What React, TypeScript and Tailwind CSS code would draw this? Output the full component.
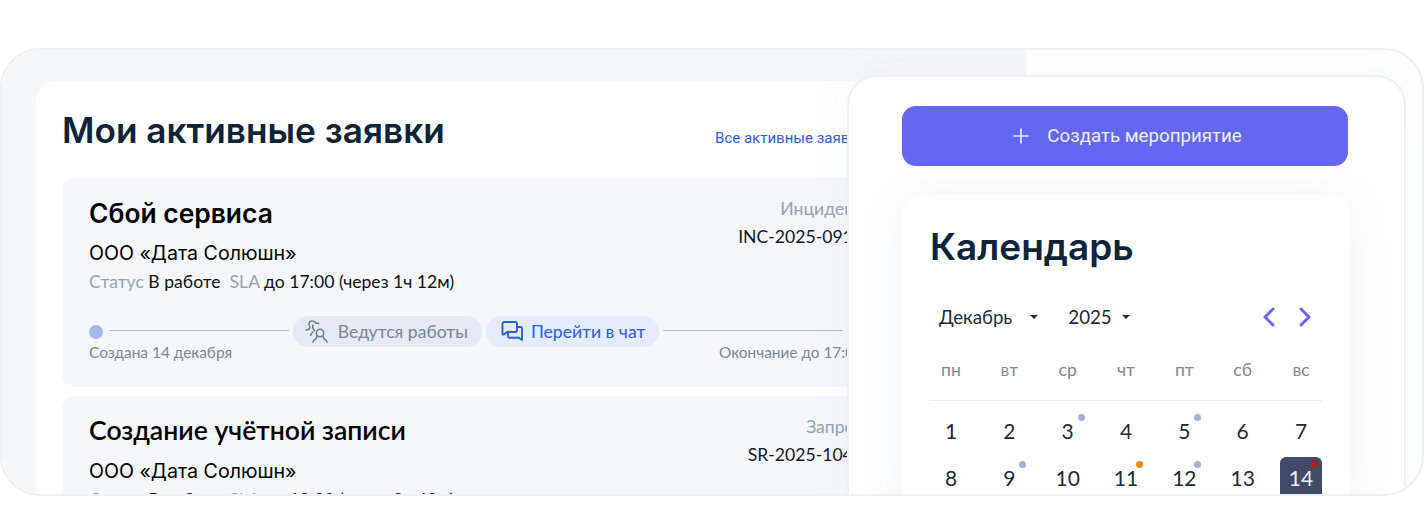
import React from "react";

const lato = "font-['Lato','Liberation_Sans',sans-serif]";

function WorkIcon() {
  return (
    <svg width="24" height="24" viewBox="0 0 24 24" fill="none" stroke="#6f7c8d" strokeWidth="1.5" strokeLinecap="round" strokeLinejoin="round">
      <path d="M1 10c2 0 3.500-.8 3.800-2.300C5 6 3.800 5.500 4 3.500 4.200 1.500 6 1 7.500 1c1.500 0 2.800.7 3.200 2" />
      <path d="M10.700 3l3 .5" />
      <path d="M8 5c-.8 2 0 4 1.500 5.500" />
      <path d="M8 12c-1.200.8-2 2-2.500 3.500" />
      <circle cx="15" cy="13" r="3.700" />
      <path d="M12 16c0 2-1 3-2.500 3.800-.8.4-1.300 1.200-1.500 2.200" />
      <path d="M18 16c0 2 1 3 2.500 3.800.8.4 1.300 1.200 1.500 2.200" />
    </svg>
  );
}

function ChatIcon() {
  return (
    <svg width="24" height="24" viewBox="0 0 24 24" fill="none" stroke="#2860dc" strokeWidth="1.9" strokeLinecap="round" strokeLinejoin="round">
      <path d="M4 2h11a2 2 0 0 1 2 2v6a2 2 0 0 1-2 2H7l-3 2.500c-.6.3-1.500.2-1.500-1V4A2 2 0 0 1 4 2Z" />
      <path d="M17 7h3.500A1.500 1.500 0 0 1 22 8.500V20l-3.200-2.200H9.500A1.500 1.500 0 0 1 8 16.300V12" />
    </svg>
  );
}

function Ticket({ title, type, code, status, sla, titleClass }: { title: string; type: string; code: string; status: string; sla: string; titleClass: string }) {
  return (
    <div className="rounded-[10px] bg-[#f5f7fb] pt-[19px] pb-[27px] pl-[26px] pr-[26px]">
      <div className="flex justify-between">
        <div>
          <div className={`leading-[32px] font-semibold text-black ${titleClass}`}>{title}</div>
          <div className="mt-[11px] text-[19.6px] leading-[26px] text-black font-['Inter',sans-serif]">ООО «Дата Солюшн»</div>
          <div className={`mt-[3px] text-[17.6px] leading-[26px] text-[#111] whitespace-nowrap ${lato}`}>
            <span className="text-[#94a3b3]">Статус</span> {status}
            <span className="ml-[9px] text-[#94a3b3]">SLA</span> {sla}
          </div>
        </div>
        <div className={`flex flex-col items-end pt-[1px] pr-[4px] text-[17.6px] leading-[22px] whitespace-nowrap ${lato}`}>
          <div className="text-[#94a3b3]">{type}</div>
          <div className="mt-[6px] text-[#111827]">{code}</div>
        </div>
      </div>
      <div className="mt-[21px] flex items-center">
        <span className="h-[14px] w-[14px] shrink-0 rounded-full bg-[#a4b9e8]" />
        <span className="ml-[6px] mr-[4px] h-px flex-1 -translate-y-px bg-[#a9bfec]" />
        <span className={`flex h-[31px] items-center gap-[9px] rounded-full bg-[#e5e9f4] pl-[12px] pr-[14px] text-[17.6px] text-[#7b8794] ${lato}`}>
          <WorkIcon />
          <span className="pt-[2px]">Ведутся работы</span>
        </span>
        <span className={`ml-[4px] flex h-[31px] items-center gap-[7px] rounded-full bg-[#e3ebfc] pl-[14px] pr-[14px] text-[17.6px] text-[#2860dc] ${lato}`}>
          <ChatIcon />
          <span className="pt-[2px]">Перейти в чат</span>
        </span>
        <span className="ml-[4px] mr-[10px] h-px flex-1 -translate-y-px bg-[#a9bfec]" />
        <span className="h-[14px] w-[14px] shrink-0 rounded-full bg-[#a4b9e8]" />
      </div>
      <div className={`-mt-[3px] flex justify-between pr-[4px] text-[15.4px] leading-[16px] text-[#7b8794] ${lato}`}>
        <span>Создана 14 декабря</span>
        <span>Окончание до 17:00</span>
      </div>
    </div>
  );
}

const weekdays = ["пн", "вт", "ср", "чт", "пт", "сб", "вс"];
const days: { d: number; dot?: string; today?: boolean }[] = [
  { d: 1 }, { d: 2 }, { d: 3, dot: "bg-[#a3afd3]" }, { d: 4 }, { d: 5, dot: "bg-[#a3afd3]" }, { d: 6 }, { d: 7 },
  { d: 8 }, { d: 9, dot: "bg-[#a3afd3]" }, { d: 10 }, { d: 11, dot: "bg-[#f98a06]" }, { d: 12, dot: "bg-[#a3afd3]" }, { d: 13 }, { d: 14, dot: "bg-[#b32206]", today: true },
];

function Caret() {
  return <span className="block h-0 w-0 border-x-[4px] border-t-[4px] border-x-transparent border-t-[#1c2a3a]" />;
}

export default function App() {
  return (
    <div className="h-[506px] w-[1424px] overflow-hidden bg-white pt-[48px]">
      <div className="relative h-[448px] w-[1424px] overflow-hidden rounded-[40px] border-2 border-[#eff0f3] bg-white">
        <div className="h-full w-[1024px] bg-[#f5f7fb] pl-[34px] pt-[31px]">
          <div className="h-full w-[884px] rounded-tl-[20px] bg-white pl-[27px] pr-[27px]">
            <div className="flex items-center justify-between pt-[26px]">
              <h1 className="-ml-px text-[35.2px] leading-[46px] font-semibold text-[#0e2439] font-['Inter',sans-serif]">Мои активные заявки</h1>
              <a className="mt-[17px] pr-[27px] text-[15px] text-[#2860dc] font-['Roboto',sans-serif]">Все активные заявки</a>
            </div>
            <div className="mt-[25px] flex flex-col gap-[9px]">
              <Ticket title="Сбой сервиса" type="Инцидент" code="INC-2025-0912" status="В работе" sla="до 17:00 (через 1ч 12м)" titleClass="text-[26.4px] font-['Inter',sans-serif]" />
              <Ticket title="Создание учётной записи" type="Запрос" code="SR-2025-1045" status="В работе" sla="до 18:30 (через 2ч 42м)" titleClass="text-[26.6px] -translate-y-px font-['Lato',sans-serif]" />
            </div>
          </div>
        </div>

        <div className="absolute left-[845px] top-[25px] h-[460px] w-[559px] rounded-[30px] border-2 border-[#eff0f3] bg-white px-[53px] pt-[29px] shadow-[0_0_40px_rgba(120,140,200,0.06)]">
          <button className="flex h-[60px] w-[446px] items-center justify-center gap-[17px] rounded-[14px] bg-[#6467f2] pl-[4px] text-[18.7px] text-[#eceeff] font-['Roboto',sans-serif]">
            <svg width="18" height="18" viewBox="0 0 18 18" stroke="#eceeff" strokeWidth="1.6" strokeLinecap="round">
              <path d="M9 2v14M2 9h14" />
            </svg>
            Создать мероприятие
          </button>
          <div className="mt-[29px] h-[320px] w-[448px] rounded-[20px] bg-white px-[28px] pt-[27px] shadow-[0_4px_40px_rgba(110,130,190,0.10)]">
            <h2 className="text-[37px] leading-[50px] font-semibold text-[#0e2439] font-['Inter',sans-serif]">Календарь</h2>
            <div className={`mt-[31px] flex h-[28px] items-center text-[18.7px] text-[#1c2a3a] ${lato}`}>
              <span className="ml-[9px]">Декабрь</span>
              <span className="ml-[18px]"><Caret /></span>
              <span className="ml-[30px]">2025</span>
              <span className="ml-[10px]"><Caret /></span>
              <span className="ml-auto flex items-center gap-[18px] pr-[8px]">
                <svg width="18" height="24" viewBox="0 0 18 24" fill="none" stroke="#6467f2" strokeWidth="3" strokeLinecap="round" strokeLinejoin="round"><path d="M13 4l-8 8 8 8" /></svg>
                <svg width="18" height="24" viewBox="0 0 18 24" fill="none" stroke="#6467f2" strokeWidth="3" strokeLinecap="round" strokeLinejoin="round"><path d="M5 4l8 8-8 8" /></svg>
              </span>
            </div>
            <div className={`mt-[29px] flex justify-between border-b border-[#e9ecf1] pb-[20px] text-[17.6px] leading-[20px] text-[#7e8a98] ${lato}`}>
              {weekdays.map((w) => (
                <span key={w} className="w-[42px] text-center">{w}</span>
              ))}
            </div>
            <div className={`grid grid-cols-[42px_1fr_42px_1fr_42px_1fr_42px_1fr_42px_1fr_42px_1fr_42px] gap-y-[5px] pt-[9px] text-[21px] leading-[42px] text-[#1c2a3a] ${lato}`}>
              {days.map((c, i) => (
                <React.Fragment key={c.d}>
                  <span className={`relative h-[42px] w-[42px] rounded-[6px] text-center ${c.today ? "bg-[#414a6b] text-[#eef0f6]" : ""}`}>
                    {c.d}
                    {c.dot && <span className={`absolute left-[31px] top-[4px] h-[7px] w-[7px] rounded-full ${c.dot}`} />}
                  </span>
                  {i % 7 !== 6 && <span />}
                </React.Fragment>
              ))}
            </div>
          </div>
        </div>
      </div>
    </div>
  );
}
